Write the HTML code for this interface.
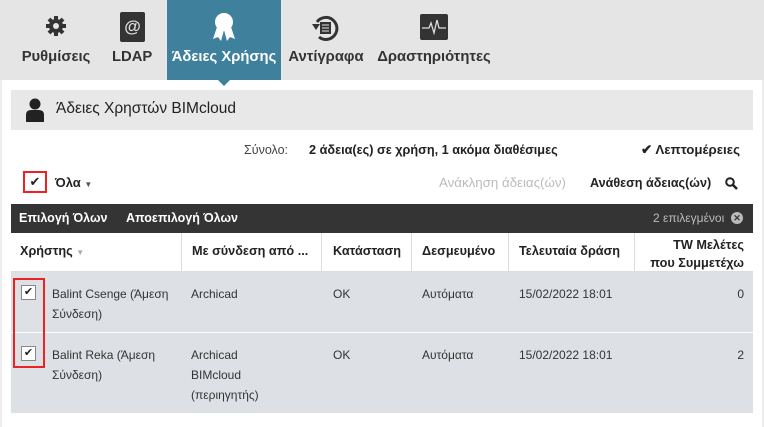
<html><head><style>
body{margin:0;width:764px;height:427px;overflow:hidden;background:#fff;font-family:"Liberation Sans",sans-serif;font-size:12px;color:#222;position:relative}
.a{position:absolute}
.nav{left:0;top:0;width:764px;height:80px;background:#e5e5e5}
.lbl{top:49px;font-weight:bold;font-size:14.8px;color:#333;white-space:nowrap;text-align:center}
.act{background:#3f819d}
.hdr{left:11px;top:90px;width:742px;height:40px;background:#e8e8e8}
.dark{left:11px;top:204px;width:742px;height:29px;background:#343434;color:#fff;font-weight:bold;font-size:12.5px}
.row{left:11px;width:742px;background:#dde0e4}
.cb{width:13px;height:13px;border:1px solid #888;background:#fff;font-size:11px;line-height:13px;text-align:center}
.th{font-weight:bold;font-size:12.7px;top:244px}
.vl{top:233px;height:38px;width:1px;background:#ddd}
.t{font-size:12px;line-height:20px}
</style></head><body>
<div class="a nav"></div>
<svg class="a" style="left:45px;top:15px" width="22" height="22" viewBox="0 0 22 22"><circle cx="11" cy="11" r="7" fill="#333"/><g stroke="#333" stroke-width="4"><line x1="11" y1="1" x2="11" y2="21"/><line x1="1" y1="11" x2="21" y2="11"/><line x1="4" y1="4" x2="18" y2="18"/><line x1="18" y1="4" x2="4" y2="18"/></g><circle cx="11" cy="11" r="3" fill="#e5e5e5"/></svg>
<div class="a lbl" style="left:20px;width:72px">Ρυθμίσεις</div>
<div class="a" style="left:120px;top:12px;width:25px;height:30px;background:#333;border-radius:2px;color:#ddd;font-weight:bold;font-size:17px;text-align:center;line-height:30px">@</div>
<div class="a lbl" style="left:112px;width:40px">LDAP</div>
<div class="a act" style="left:167px;top:0;width:114px;height:80px"></div>
<svg class="a" style="left:212px;top:12px" width="24" height="30" viewBox="0 0 24 30"><circle cx="12" cy="10" r="9" fill="#fff"/><path d="M5 15 L1 27 L6 25 L9 29 L12 18 L15 29 L18 25 L23 27 L19 15Z" fill="#fff"/></svg>
<div class="a lbl" style="left:167px;width:114px;color:#fff">Άδειες Χρήσης</div>
<div class="a" style="left:218px;top:80px;width:0;height:0;border-left:6px solid transparent;border-right:6px solid transparent;border-top:6px solid #3f819d"></div>
<svg class="a" style="left:309px;top:12px" width="32" height="32" viewBox="0 0 32 32"><path d="M8 10 A11 11 0 1 1 10 25" fill="none" stroke="#333" stroke-width="3"/><path d="M3 12 L11 12 L7 18Z" fill="#333"/><rect x="11" y="10" width="11" height="12" fill="#333"/><g stroke="#e5e5e5"><line x1="13" y1="13" x2="20" y2="13"/><line x1="13" y1="16" x2="20" y2="16"/><line x1="13" y1="19" x2="20" y2="19"/></g></svg>
<div class="a lbl" style="left:286px;width:80px">Αντίγραφα</div>
<svg class="a" style="left:420px;top:13px" width="28" height="28" viewBox="0 0 28 28"><rect x="0" y="1" width="28" height="26" rx="2" fill="#333"/><path d="M2 15 H9 L11 10 L14 20 L17 7 L19 15 H26" fill="none" stroke="#ddd" stroke-width="1.3"/></svg>
<div class="a lbl" style="left:374px;width:120px">Δραστηριότητες</div>
<div class="a hdr"><svg class="a" style="left:15px;top:8px" width="18" height="24" viewBox="0 0 18 24"><circle cx="9" cy="6" r="5.5" fill="#222"/><path d="M0 24 V17 Q0 12 5 12 H13 Q18 12 18 17 V24Z" fill="#222"/></svg><div class="a" style="left:45px;top:10px;font-size:15.5px;color:#222">Άδειες Χρηστών BIMcloud</div></div>
<div class="a t" style="left:244px;top:140px;color:#444;font-size:12.5px">Σύνολο:</div>
<div class="a t" style="left:309px;top:140px;font-weight:bold;font-size:12.7px">2 άδεια(ες) σε χρήση, 1 ακόμα διαθέσιμες</div>
<div class="a t" style="left:641px;top:140px;font-weight:bold;font-size:13.3px">✔ Λεπτομέρειες</div>
<div class="a" style="left:23px;top:171px;width:24px;height:22px;border:2px solid #e22;box-sizing:border-box;text-align:center;line-height:18px;font-size:13px">✔</div>
<div class="a t" style="left:55px;top:173px;font-weight:bold;font-size:13px">Όλα <span style="font-size:8px;color:#555">▼</span></div>
<div class="a t" style="left:439px;top:173px;color:#bbb;font-size:13.3px">Ανάκληση άδειας(ών)</div>
<div class="a t" style="left:590px;top:173px;font-weight:bold;font-size:12.6px">Ανάθεση άδειας(ών)</div>
<svg class="a" style="left:725px;top:177px" width="13" height="13" viewBox="0 0 13 13"><circle cx="5" cy="5" r="3.8" fill="none" stroke="#222" stroke-width="2"/><line x1="8" y1="8" x2="12" y2="12" stroke="#222" stroke-width="2.5"/></svg>
<div class="a dark"><div class="a" style="left:8px;top:7px">Επιλογή Όλων</div><div class="a" style="left:115px;top:7px">Αποεπιλογή Όλων</div><div class="a" style="left:642px;top:7px;font-weight:normal;color:#bbb;font-size:12px">2 επιλεγμένοι</div><div class="a" style="left:720px;top:8px;width:12px;height:12px;border-radius:50%;background:#bbb;color:#333;font-size:9px;line-height:12px;text-align:center">✕</div></div>
<div class="a" style="left:11px;top:271px;width:742px;height:1px;background:#ddd"></div>
<div class="a vl" style="left:181px"></div><div class="a vl" style="left:321px"></div><div class="a vl" style="left:411px"></div><div class="a vl" style="left:508px"></div><div class="a vl" style="left:634px"></div>
<div class="a th" style="left:20px">Χρήστης <span style="font-size:8px;color:#aaa">▼</span></div>
<div class="a th" style="left:192px">Με σύνδεση από ...</div>
<div class="a th" style="left:333px">Κατάσταση</div>
<div class="a th" style="left:422px">Δεσμευμένο</div>
<div class="a th" style="left:519px">Τελευταία δράση</div>
<div class="a th" style="right:20px;top:236px;text-align:right;line-height:18px">TW Μελέτες<br>που Συμμετέχω</div>
<div class="a row" style="top:272px;height:60px"></div>
<div class="a row" style="top:333px;height:80px"></div>
<div class="a" style="left:13px;top:278px;width:32px;height:90px;border:2px solid #e22;box-sizing:border-box"></div>
<div class="a cb" style="left:21px;top:285px">✔</div>
<div class="a cb" style="left:21px;top:346px">✔</div>
<div class="a t" style="left:52px;top:284px;color:#333">Balint Csenge (Άμεση<br>Σύνδεση)</div>
<div class="a t" style="left:191px;top:284px;color:#333">Archicad</div>
<div class="a t" style="left:333px;top:284px;color:#333">OK</div>
<div class="a t" style="left:422px;top:284px;color:#333">Αυτόματα</div>
<div class="a t" style="left:519px;top:284px;color:#333">15/02/2022 18:01</div>
<div class="a t" style="right:20px;top:284px;color:#333">0</div>
<div class="a t" style="left:52px;top:345px;color:#333">Balint Reka (Άμεση<br>Σύνδεση)</div>
<div class="a t" style="left:191px;top:345px;color:#333">Archicad<br>BIMcloud<br>(περιηγητής)</div>
<div class="a t" style="left:333px;top:345px;color:#333">OK</div>
<div class="a t" style="left:422px;top:345px;color:#333">Αυτόματα</div>
<div class="a t" style="left:519px;top:345px;color:#333">15/02/2022 18:01</div>
<div class="a t" style="right:20px;top:345px;color:#333">2</div>
<div class="a" style="left:0;top:80px;width:2px;height:347px;background:#eee"></div>
<div class="a" style="right:0;top:80px;width:2px;height:347px;background:#eee"></div>
</body></html>
